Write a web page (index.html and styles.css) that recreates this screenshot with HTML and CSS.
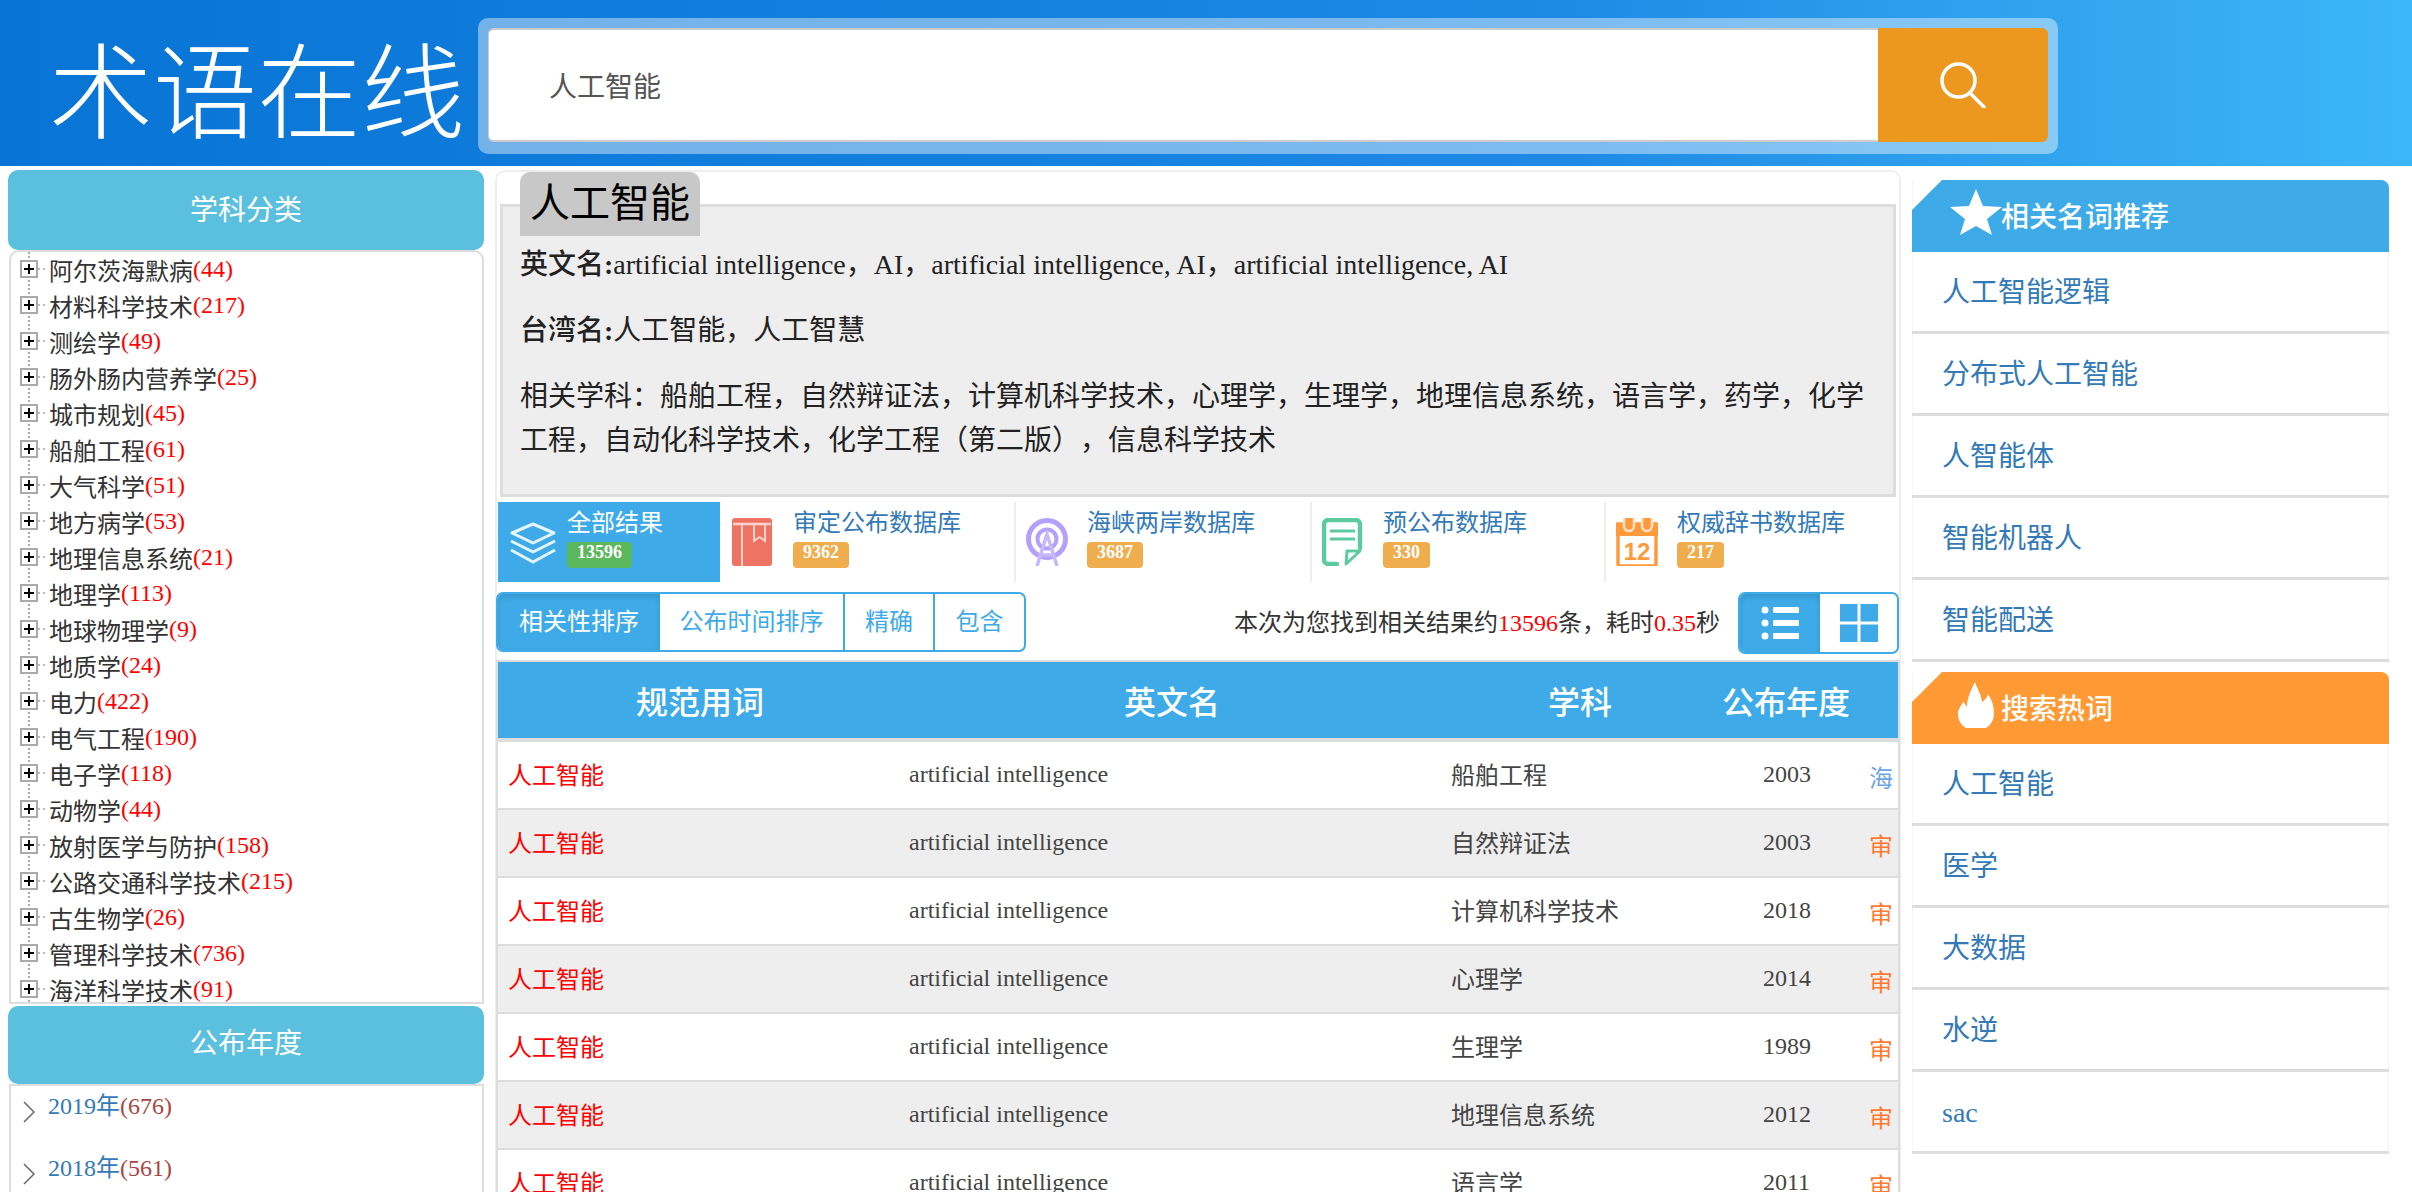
FILE: index.html
```html
<!DOCTYPE html>
<html lang="zh-CN">
<head>
    <meta charset="UTF-8">
    <title>术语在线</title>
    <link rel="stylesheet" href="styles.css">
</head>
<body>

<header class="site-header">
    <div class="logo">术语在线</div>
    <form class="search-box">
        <input class="search-input" type="text" value="人工智能">
        <button class="search-btn" type="button">
            <svg width="46" height="46" viewBox="0 0 46 46" fill="none" stroke="#fff" stroke-width="3.5" stroke-linecap="round">
                <circle cx="18.500" cy="18.500" r="16.500"/>
                <line x1="30" y1="31" x2="44" y2="45"/>
            </svg>
        </button>
    </form>
</header>

<div class="layout">
    <aside class="left-col">
        <div class="side-title">学科分类</div>
        <ul class="tree">
            <li><i class="tree-plus"></i><i class="tree-stub"></i>阿尔茨海默病<em>(44)</em></li>
            <li><i class="tree-plus"></i><i class="tree-stub"></i>材料科学技术<em>(217)</em></li>
            <li><i class="tree-plus"></i><i class="tree-stub"></i>测绘学<em>(49)</em></li>
            <li><i class="tree-plus"></i><i class="tree-stub"></i>肠外肠内营养学<em>(25)</em></li>
            <li><i class="tree-plus"></i><i class="tree-stub"></i>城市规划<em>(45)</em></li>
            <li><i class="tree-plus"></i><i class="tree-stub"></i>船舶工程<em>(61)</em></li>
            <li><i class="tree-plus"></i><i class="tree-stub"></i>大气科学<em>(51)</em></li>
            <li><i class="tree-plus"></i><i class="tree-stub"></i>地方病学<em>(53)</em></li>
            <li><i class="tree-plus"></i><i class="tree-stub"></i>地理信息系统<em>(21)</em></li>
            <li><i class="tree-plus"></i><i class="tree-stub"></i>地理学<em>(113)</em></li>
            <li><i class="tree-plus"></i><i class="tree-stub"></i>地球物理学<em>(9)</em></li>
            <li><i class="tree-plus"></i><i class="tree-stub"></i>地质学<em>(24)</em></li>
            <li><i class="tree-plus"></i><i class="tree-stub"></i>电力<em>(422)</em></li>
            <li><i class="tree-plus"></i><i class="tree-stub"></i>电气工程<em>(190)</em></li>
            <li><i class="tree-plus"></i><i class="tree-stub"></i>电子学<em>(118)</em></li>
            <li><i class="tree-plus"></i><i class="tree-stub"></i>动物学<em>(44)</em></li>
            <li><i class="tree-plus"></i><i class="tree-stub"></i>放射医学与防护<em>(158)</em></li>
            <li><i class="tree-plus"></i><i class="tree-stub"></i>公路交通科学技术<em>(215)</em></li>
            <li><i class="tree-plus"></i><i class="tree-stub"></i>古生物学<em>(26)</em></li>
            <li><i class="tree-plus"></i><i class="tree-stub"></i>管理科学技术<em>(736)</em></li>
            <li><i class="tree-plus"></i><i class="tree-stub"></i>海洋科学技术<em>(91)</em></li>
        </ul>
        <div class="side-title side-title-year">公布年度</div>
        <ul class="year-list">
            <li>
                <svg class="chevron" width="12" height="22" viewBox="0 0 12 22" fill="none" stroke="#666" stroke-width="1.5"><path d="M1 1l10 10L1 21"/></svg>
                <a>2019年</a><b>(676)</b>
            </li>
            <li>
                <svg class="chevron" width="12" height="22" viewBox="0 0 12 22" fill="none" stroke="#666" stroke-width="1.5"><path d="M1 1l10 10L1 21"/></svg>
                <a>2018年</a><b>(561)</b>
            </li>
        </ul>
    </aside>

    <main class="main-col">
        <section class="term">
            <h1 class="term-name">人工智能</h1>
            <div class="term-box">
                <p><b>英文名<strong>:</strong></b>artificial intelligence，AI，artificial intelligence, AI，artificial intelligence, AI</p>
                <p><b>台湾名<strong>:</strong></b>人工智能，人工智慧</p>
                <p>相关学科：船舶工程，自然辩证法，计算机科学技术，心理学，生理学，地理信息系统，语言学，药学，化学工程，自动化科学技术，化学工程（第二版），信息科学技术</p>
            </div>
        </section>

        <nav class="db-tabs">
            <a class="db-tab db-tab-active">
                <svg class="db-icon db-icon-wide" width="50" height="42" viewBox="0 0 50 42" fill="none" stroke="#e4f4fd" stroke-width="3" stroke-linejoin="round">
                    <path d="M25 2L46 11 25 21 4 11z"/>
                    <path d="M3 19l22 11 22-11"/>
                    <path d="M3 28l22 12 22-12"/>
                </svg>
                <span class="db-text"><span class="db-name">全部结果</span><span class="badge badge-green">13596</span></span>
            </a>
            <a class="db-tab">
                <svg class="db-icon" width="42" height="48" viewBox="0 0 42 48">
                    <rect x="0" y="0" width="40" height="48" rx="3" fill="#ee7362"/>
                    <path d="M1 6h38" stroke="#fbd3cc" stroke-width="2.500"/>
                    <path d="M10 6v42M22 6v17l5.500-4 5.500 4V6" fill="none" stroke="#fbd3cc" stroke-width="2"/>
                </svg>
                <span class="db-text"><span class="db-name">审定公布数据库</span><span class="badge">9362</span></span>
            </a>
            <a class="db-tab">
                <svg class="db-icon" width="42" height="48" viewBox="0 0 42 48" fill="none">
                    <circle cx="21" cy="21" r="18.500" stroke="#b3a0fb" stroke-width="5"/>
                    <circle cx="21" cy="21" r="9.500" stroke="#b3a0fb" stroke-width="4"/>
                    <path d="M11 48l10-32 10 32M15 37h12" stroke="#c6b8fb" stroke-width="3.500"/>
                </svg>
                <span class="db-text"><span class="db-name">海峡两岸数据库</span><span class="badge">3687</span></span>
            </a>
            <a class="db-tab">
                <svg class="db-icon" width="42" height="48" viewBox="0 0 42 48" fill="none" stroke="#5ccba0" stroke-width="4.500" stroke-linejoin="round" stroke-linecap="round">
                    <path d="M15 46H6c-2 0-4-2-4-4V6c0-2 2-4 4-4h28c2 0 4 2 4 4v24"/>
                    <path d="M8 13h25M8 21h25" stroke-width="3" stroke-linecap="butt"/>
                    <path d="M25 33h13L24 46z" stroke-width="3"/>
                </svg>
                <span class="db-text"><span class="db-name">预公布数据库</span><span class="badge">330</span></span>
            </a>
            <a class="db-tab">
                <svg class="db-icon" width="42" height="48" viewBox="0 0 42 48">
                    <path d="M2 6h38v40a2 2 0 0 1-2 2H4a2 2 0 0 1-2-2z" fill="#fff" stroke="#ff9a3c" stroke-width="3.500"/>
                    <path d="M0 5h42v13H0z" fill="#ff9a3c"/>
                    <path d="M8 0v8a5 5 0 0 0 10 0V0M26 0v8a5 5 0 0 0 10 0V0" fill="#ff9a3c" stroke="#ffe3c9" stroke-width="2.500"/>
                    <text class="cal-day" x="21" y="42" text-anchor="middle">12</text>
                </svg>
                <span class="db-text"><span class="db-name">权威辞书数据库</span><span class="badge">217</span></span>
            </a>
        </nav>

        <div class="toolbar">
            <div class="sort-group">
                <a class="sort-btn sort-active sort-w1">相关性排序</a>
                <a class="sort-btn sort-w2">公布时间排序</a>
                <a class="sort-btn sort-w3">精确</a>
                <a class="sort-btn sort-w4">包含</a>
            </div>
            <div class="toolbar-right">
                <span class="result-stat">本次为您找到相关结果约<em>13596</em>条，耗时<em>0.35</em>秒</span>
                <div class="view-toggle">
                    <a class="view-btn view-active">
                        <svg width="38" height="36" viewBox="0 0 38 36" fill="#fff">
                            <circle cx="4" cy="5" r="3.5"/><rect x="12" y="2" width="26" height="6" rx="1"/>
                            <circle cx="4" cy="18" r="3.5"/><rect x="12" y="15" width="26" height="6" rx="1"/>
                            <circle cx="4" cy="31" r="3.5"/><rect x="12" y="28" width="26" height="6" rx="1"/>
                        </svg>
                    </a>
                    <a class="view-btn">
                        <svg width="38" height="38" viewBox="0 0 38 38" fill="#3eabe8">
                            <rect width="17.500" height="17.500"/><rect x="20.500" width="17.500" height="17.500"/>
                            <rect y="20.500" width="17.500" height="17.500"/><rect x="20.500" y="20.500" width="17.500" height="17.500"/>
                        </svg>
                    </a>
                </div>
            </div>
        </div>

        <table class="result-table">
            <colgroup>
                <col class="col-name"><col class="col-en"><col class="col-subject"><col class="col-year"><col class="col-mark">
            </colgroup>
            <thead>
                <tr><th>规范用词</th><th>英文名</th><th>学科</th><th>公布年度</th><th></th></tr>
            </thead>
            <tbody>
                <tr><td class="cell-name">人工智能</td><td>artificial intelligence</td><td class="cell-subject">船舶工程</td><td class="cell-year">2003</td><td class="mark-hai">海</td></tr>
                <tr><td class="cell-name">人工智能</td><td>artificial intelligence</td><td class="cell-subject">自然辩证法</td><td class="cell-year">2003</td><td class="mark-shen">审</td></tr>
                <tr><td class="cell-name">人工智能</td><td>artificial intelligence</td><td class="cell-subject">计算机科学技术</td><td class="cell-year">2018</td><td class="mark-shen">审</td></tr>
                <tr><td class="cell-name">人工智能</td><td>artificial intelligence</td><td class="cell-subject">心理学</td><td class="cell-year">2014</td><td class="mark-shen">审</td></tr>
                <tr><td class="cell-name">人工智能</td><td>artificial intelligence</td><td class="cell-subject">生理学</td><td class="cell-year">1989</td><td class="mark-shen">审</td></tr>
                <tr><td class="cell-name">人工智能</td><td>artificial intelligence</td><td class="cell-subject">地理信息系统</td><td class="cell-year">2012</td><td class="mark-shen">审</td></tr>
                <tr><td class="cell-name">人工智能</td><td>artificial intelligence</td><td class="cell-subject">语言学</td><td class="cell-year">2011</td><td class="mark-shen">审</td></tr>
            </tbody>
        </table>
    </main>

    <aside class="right-col">
        <div class="rec-panel">
            <div class="rec-title">
                <svg class="rec-icon" width="52" height="46" viewBox="0 0 52 46" fill="#fff"><path d="M26 0l7 17 19 1-15 12 5 16-16-9-16 9 5-16L0 18l19-1z"/></svg>
                相关名词推荐
            </div>
            <a class="rec-item">人工智能逻辑</a>
            <a class="rec-item">分布式人工智能</a>
            <a class="rec-item">人智能体</a>
            <a class="rec-item">智能机器人</a>
            <a class="rec-item">智能配送</a>
        </div>
        <div class="rec-panel rec-hot">
            <div class="rec-title">
                <svg class="rec-icon rec-icon-fire" width="36" height="46" viewBox="0 0 36 46" fill="#fff"><path d="M17 0c2 7 6 11 7 20 3-2 5-4 6-8 4 6 6 12 6 19 0 7-3 12-8 15H8c-5-3-8-8-8-14 0-5 3-8 5-12 2 2 3 3 4 5 0-9 4-17 8-25z"/></svg>
                搜索热词
            </div>
            <a class="rec-item">人工智能</a>
            <a class="rec-item">医学</a>
            <a class="rec-item">大数据</a>
            <a class="rec-item">水逆</a>
            <a class="rec-item">sac</a>
        </div>
    </aside>
</div>

</body>
</html>
```

FILE: styles.css
```css
* {
    box-sizing: border-box;
}

html, body {
    height: 1192px;
    overflow: hidden;
}

body {
    margin: 0;
    background-color: #fff;
    color: #333;
    font-family: "Liberation Serif", "Noto Sans CJK SC", serif;
    font-size: 24px;
    text-spacing-trim: space-all;
}

em {
    font-style: normal;
    color: #f00;
}

/* header */
.site-header {
    display: flex;
    align-items: flex-start;
    height: 166px;
    padding-top: 18px;
    background: linear-gradient(90deg, #0875d6 0%, #1480de 40%, #1f8ae6 65%, #2d9eec 80%, #3db6f8 100%);
}

.logo {
    width: 478px;
    padding-left: 49px;
    color: #fff;
    font-family: "Noto Sans CJK SC", sans-serif;
    font-size: 104px;
    font-weight: 300;
    line-height: 136px;
    white-space: nowrap;
}

.search-box {
    display: flex;
    width: 1580px;
    height: 136px;
    padding: 10px;
    background-color: rgba(255, 255, 255, 0.42);
    border-radius: 10px;
}

.search-input {
    width: 1390px;
    height: 114px;
    padding: 0 0 0 60px;
    border: none;
    border-top: 2px solid #ccc;
    border-bottom: 2px solid #ccc;
    border-left: 1px solid #ccc;
    border-radius: 6px 0 0 6px;
    background: #fff;
    color: #555;
    font-family: inherit;
    font-size: 28px;
}

.search-btn {
    display: flex;
    align-items: center;
    justify-content: center;
    width: 170px;
    height: 114px;
    padding: 0;
    border: none;
    border-radius: 0 6px 6px 0;
    background-color: #ec981f;
}

/* page columns */
.layout {
    display: flex;
    align-items: flex-start;
    padding-left: 8px;
}

.left-col {
    width: 476px;
    margin-top: 4px;
}

.main-col {
    width: 1406px;
    margin: 4px 0 0 11px;
    border: 2px solid #eee;
    border-bottom: none;
    border-radius: 10px 10px 0 0;
}

.right-col {
    width: 477px;
    margin: 14px 0 0 11px;
}

/* left column */
.side-title {
    height: 80px;
    background-color: #5bc0de;
    border-radius: 10px;
    color: #fff;
    font-size: 28px;
    line-height: 82px;
    text-align: center;
}

.side-title-year {
    height: 78px;
    margin-top: 2px;
    line-height: 76px;
}

.tree {
    height: 754px;
    margin: 0 0 0 1px;
    padding: 0;
    overflow: hidden;
    list-style: none;
    border: 2px solid #ddd;
    border-radius: 10px 10px 0 0;
    background: repeating-linear-gradient(to bottom, #aaa 0 2px, transparent 2px 4px) 17px 0 / 2px 100% no-repeat;
}

.tree li {
    display: flex;
    align-items: center;
    height: 36px;
    padding-bottom: 2px;
    white-space: nowrap;
}

.tree-plus {
    flex: none;
    width: 18px;
    height: 18px;
    margin: 0 0 0 9px;
    border: 2px solid #aaa;
    background:
        linear-gradient(#000, #000) center / 10px 2px no-repeat,
        linear-gradient(#000, #000) center / 2px 10px no-repeat,
        #fff;
}

.tree-stub {
    flex: none;
    width: 7px;
    margin: 0 4px 0 0;
    border-top: 2px dotted #bbb;
}

.year-list {
    margin: 0 0 0 1px;
    padding: 0;
    list-style: none;
    border: 2px solid #ddd;
    border-bottom: none;
}

.year-list li {
    height: 62px;
    padding-left: 12px;
    line-height: 40px;
    white-space: nowrap;
}

.chevron {
    margin-right: 7px;
    vertical-align: -9px;
}

.year-list a {
    color: #337ab7;
}

.year-list b {
    color: #a94442;
    font-weight: normal;
}

/* term summary */
.term-name {
    position: relative;
    z-index: 1;
    width: 180px;
    height: 64px;
    margin: 0 0 -32px 23px;
    background-color: #c8c8c8;
    border-radius: 10px 10px 0 0;
    color: #000;
    font-size: 40px;
    font-weight: normal;
    line-height: 64px;
    text-align: center;
}

.term-box {
    height: 293px;
    margin: 0 3px;
    padding: 36px 17px 0;
    background-color: #eee;
    border: 3px solid #ddd;
    font-size: 28px;
    line-height: 44px;
    color: #222;
}

.term-box p {
    margin: 0 0 22px;
}

.term-box b {
    font-weight: 500;
}

.term-box strong {
    font-weight: bold;
}

/* database tabs */
.db-tabs {
    display: grid;
    grid-template-columns: 223px 295px 296px 294px 1fr;
    height: 80px;
    margin: 5px 3px 0 1px;
}

.db-tab {
    display: flex;
    align-items: flex-start;
    padding: 4px 0 0 10px;
    border-right: 2px solid #eee;
}

.db-tab:first-child {
    padding-left: 10px;
    background-color: #3eabe8;
    border-right: none;
    margin-right: 1px;
}

.db-tab:nth-child(2) {
    padding-left: 11px;
}

.db-tab:last-child {
    border-right: none;
}

.db-icon {
    flex: none;
    margin: 12px 19px 0 0;
}

.db-icon-wide {
    margin: 16px 9px 0 0;
}

.cal-day {
    fill: #ff9a3c;
    font-family: "Liberation Sans", sans-serif;
    font-size: 24px;
    font-weight: bold;
}

.db-text {
    display: flex;
    flex-direction: column;
    align-items: flex-start;
}

.db-name {
    color: #337ab7;
    line-height: 34px;
    white-space: nowrap;
}

.db-tab-active .db-name {
    color: #fff;
}

.badge {
    height: 26px;
    margin-top: 2px;
    padding: 0 10px;
    background-color: #f0ad4e;
    border-radius: 4px;
    color: #fff;
    font-size: 18px;
    font-weight: bold;
    line-height: 20px;
}

.badge-green {
    background-color: #5cb85c;
}

/* toolbar */
.toolbar {
    display: flex;
    justify-content: space-between;
    align-items: flex-start;
    height: 62px;
    margin: 10px 0 0 -1px;
}

.toolbar-right {
    display: flex;
    align-items: flex-start;
}

.sort-group {
    display: flex;
    height: 60px;
    border: 2px solid #3eabe8;
    border-radius: 7px;
    overflow: hidden;
}

.sort-btn {
    color: #3eabe8;
    line-height: 56px;
    text-align: center;
    border-right: 2px solid #3eabe8;
}

.sort-btn:last-child {
    border-right: none;
}

.sort-w1 { width: 162px; }
.sort-w2 { width: 185px; }
.sort-w3 { width: 90px; }
.sort-w4 { width: 89px; }

.sort-active {
    background-color: #3eabe8;
    border-right: none;
    box-shadow: inset 0 3px 6px rgba(0, 0, 0, 0.125);
    color: #fff;
}

.result-stat {
    margin-right: 18px;
    line-height: 62px;
}

.view-toggle {
    display: flex;
    width: 161px;
    height: 62px;
    border: 2px solid #3eabe8;
    border-radius: 7px;
    overflow: hidden;
}

.view-btn {
    display: flex;
    align-items: center;
    justify-content: center;
    flex: 1;
}

.view-active {
    flex: none;
    width: 80px;
    background-color: #3eabe8;
    box-shadow: inset 0 3px 6px rgba(0, 0, 0, 0.125);
}

/* result table */
.result-table {
    width: 1404px;
    margin: 6px 0 0 -1px;
    border-collapse: separate;
    border-spacing: 0;
    table-layout: fixed;
    border-left: 2px solid #ddd;
    border-right: 2px solid #ddd;
    border-top: 2px solid #ddd;
}

.col-name { width: 404px; }
.col-en { width: 540px; }
.col-subject { width: 276px; }
.col-year { width: 136px; }
.col-mark { width: 44px; }

.result-table th {
    height: 80px;
    padding: 0;
    background-color: #3eabe8;
    border-bottom: 4px solid #ddd;
    color: #fff;
    font-size: 32px;
    font-weight: 500;
    text-align: center;
}

.result-table td {
    height: 68px;
    padding: 0 0 2px 7px;
    border-bottom: 2px solid #ddd;
    color: #444;
    white-space: nowrap;
}

.result-table tbody tr:nth-child(even) td {
    background-color: #eee;
}

.result-table .cell-name {
    padding: 0 0 4px 10px;
    color: #f00;
}

.result-table .cell-subject {
    padding: 0 0 4px 9px;
}

.result-table .cell-year {
    padding-left: 45px;
}

.result-table .mark-hai,
.result-table .mark-shen {
    padding: 2px 0 0 15px;
}

.result-table .mark-hai {
    color: #6ea6e2;
}

.result-table .mark-shen {
    color: #ff7a2f;
}

/* right column */
.rec-panel {
    border-left: 1px solid #f5f5f5;
    border-right: 1px solid #f5f5f5;
}

.rec-hot {
    margin-top: 10px;
}

.rec-title {
    display: flex;
    align-items: center;
    height: 72px;
    padding: 0 0 2px 38px;
    margin: 0 -1px;
    background-color: #3eabe8;
    border-radius: 0 8px 0 0;
    clip-path: polygon(30px 0, 100% 0, 100% 100%, 0 100%, 0 30px);
    color: #fff;
    font-size: 28px;
    font-weight: 500;
}

.rec-hot .rec-title {
    background-color: #ff9933;
}

.rec-icon {
    flex: none;
    margin: -6px -1px 0 0;
}

.rec-icon-fire {
    margin: -4px 7px 0 8px;
}

.rec-item {
    display: block;
    height: 82px;
    padding-left: 30px;
    margin: 0 -1px;
    border-bottom: 3px solid #ddd;
    color: #337ab7;
    font-size: 28px;
    line-height: 81px;
}
```
